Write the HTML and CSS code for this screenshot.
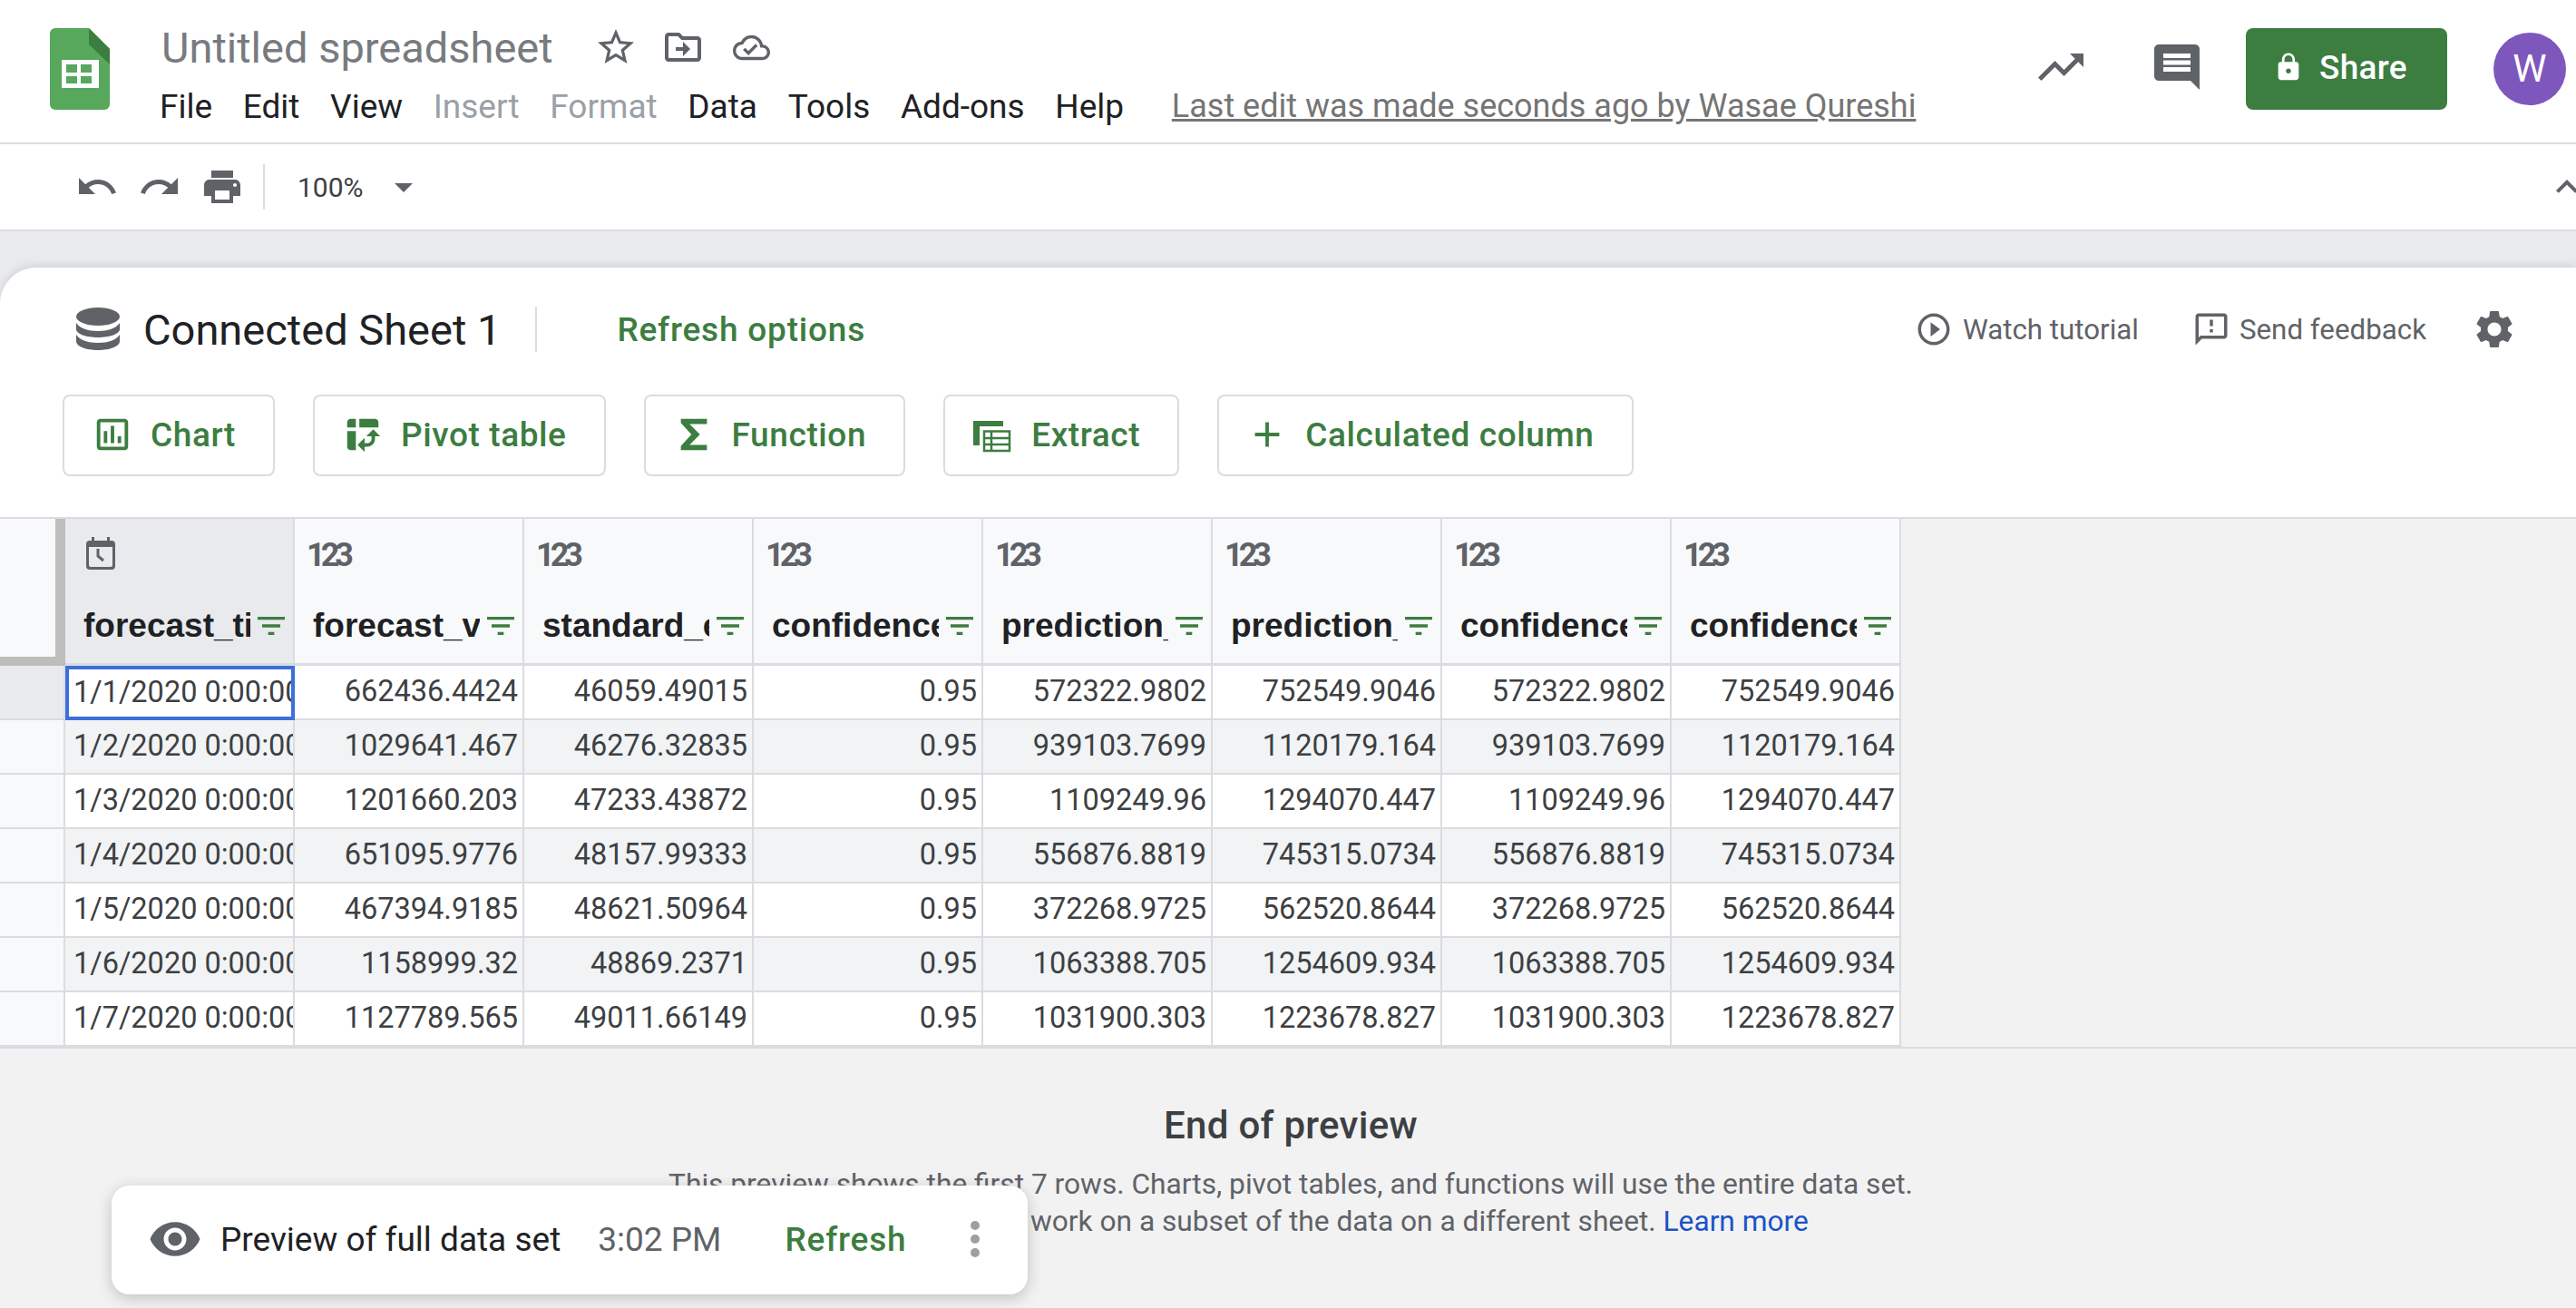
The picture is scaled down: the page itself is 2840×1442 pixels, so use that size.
FILE: index.html
```html
<!DOCTYPE html>
<html>
<head>
    <title>Untitled spreadsheet</title>
    <link rel="stylesheet" href="styles.css">
</head>
<body>
    <header class="topbar">
        <svg class="logo" viewBox="0 0 66 90">
            <path fill="#57a75c" d="M6 0H43L66 23V84a6 6 0 0 1-6 6H6a6 6 0 0 1-6-6V6a6 6 0 0 1 6-6z"/>
            <path fill="#3c7d40" d="M43 0L66 23V40L43 18z"/>
            <rect fill="#fff" x="13" y="35" width="41" height="31"/>
            <path fill="#57a75c" d="M18 40h12v9H18zM34 40h12v9H34zM18 53h12v8H18zM34 53h12v8H34z"/>
        </svg>
        <div class="doc">
            <div class="doc-title">
                <span class="doc-name">Untitled spreadsheet</span>
                <svg class="icon-star" viewBox="0 0 24 24"><path d="M22 9.24l-7.19-.62L12 2 9.19 8.63 2 9.24l5.46 4.73L5.82 21 12 17.27 18.18 21l-1.63-7.03L22 9.24zM12 15.4l-3.76 2.27 1-4.28-3.32-2.88 4.38-.38L12 6.1l1.71 4.04 4.38.38-3.32 2.88 1 4.28L12 15.4z"/></svg>
                <svg class="icon-folder" viewBox="0 0 24 24"><path d="M20 6h-8l-2-2H4c-1.1 0-2 .9-2 2v12c0 1.1.9 2 2 2h16c1.1 0 2-.9 2-2V8c0-1.1-.9-2-2-2zm0 12H4V6h5.17l2 2H20v10zm-8-4H8v-2h4V9l4 4-4 4v-3z"/></svg>
                <svg class="icon-cloud" viewBox="0 0 24 24"><path d="M19.35 10.04C18.67 6.59 15.64 4 12 4 9.11 4 6.6 5.64 5.35 8.04 2.34 8.36 0 10.91 0 14c0 3.31 2.69 6 6 6h13c2.76 0 5-2.24 5-5 0-2.64-2.05-4.78-4.65-4.96zM19 18H6c-2.21 0-4-1.79-4-4 0-2.05 1.53-3.76 3.56-3.97l1.07-.11.5-.95C8.08 7.14 9.94 6 12 6c2.62 0 4.88 1.86 5.39 4.43l.3 1.5 1.53.11c1.56.1 2.78 1.41 2.78 2.96 0 1.65-1.35 3-3 3zm-9-3.82l-2.09-2.09L6.5 13.5 10 17l6.01-6.01-1.41-1.41z"/></svg>
            </div>
            <nav class="menu">
                <span>File</span>
                <span>Edit</span>
                <span>View</span>
                <span class="off">Insert</span>
                <span class="off">Format</span>
                <span>Data</span>
                <span>Tools</span>
                <span>Add-ons</span>
                <span>Help</span>
                <a class="last-edit">Last edit was made seconds ago by Wasae Qureshi</a>
            </nav>
        </div>
        <div class="top-right">
            <svg class="icon-top" viewBox="0 0 24 24"><path d="M16 6l2.29 2.29-4.88 4.88-4-4L2 16.59 3.41 18l6-6 4 4 6.3-6.29L22 12V6z"/></svg>
            <svg class="icon-top icon-comment" viewBox="0 0 24 24"><path d="M21.99 4c0-1.1-.89-2-1.99-2H4c-1.1 0-2 .9-2 2v12c0 1.1.9 2 2 2h14l4 4-.01-18zM18 14H6v-2h12v2zm0-3H6V9h12v2zm0-3H6V6h12v2z"/></svg>
            <button class="share">
                <svg viewBox="0 0 24 24"><path d="M18 8h-1V6c0-2.76-2.24-5-5-5S7 3.24 7 6v2H6c-1.1 0-2 .9-2 2v10c0 1.1.9 2 2 2h12c1.1 0 2-.9 2-2V10c0-1.1-.9-2-2-2zm-6 9c-1.1 0-2-.9-2-2s.9-2 2-2 2 .9 2 2-.9 2-2 2zm3.1-9H8.9V6c0-1.71 1.39-3.1 3.1-3.1 1.71 0 3.1 1.39 3.1 3.1v2z"/></svg>
                Share
            </button>
            <div class="avatar">W</div>
        </div>
    </header>

    <div class="toolbar">
        <svg class="tool" viewBox="0 0 24 24"><path d="M12.5 8c-2.65 0-5.05.99-6.9 2.6L2 7v9h9l-3.62-3.62c1.39-1.16 3.16-1.88 5.12-1.88 3.54 0 6.55 2.31 7.6 5.5l2.37-.78C21.08 11.03 17.15 8 12.5 8z"/></svg>
        <svg class="tool" viewBox="0 0 24 24"><path d="M18.4 10.6C16.55 8.99 14.15 8 11.5 8c-4.65 0-8.58 3.03-9.96 7.22L3.9 16c1.05-3.19 4.05-5.5 7.6-5.5 1.95 0 3.73.72 5.12 1.88L13 16h9V7l-3.6 3.6z"/></svg>
        <svg class="tool" viewBox="0 0 24 24"><path d="M19 8H5c-1.66 0-3 1.34-3 3v6h4v4h12v-4h4v-6c0-1.66-1.34-3-3-3zm-3 11H8v-5h8v5zm3-7c-.55 0-1-.45-1-1s.45-1 1-1 1 .45 1 1-.45 1-1 1zm-1-9H6v4h12V3z"/></svg>
        <div class="tool-sep"></div>
        <span class="zoom-val">100%</span>
        <svg class="tool tool-drop" viewBox="0 0 24 24"><path d="M7 10l5 5 5-5z"/></svg>
        <svg class="tool tool-collapse" viewBox="0 0 24 24"><path d="M12 8l-6 6 1.41 1.41L12 10.83l4.59 4.58L18 14z"/></svg>
    </div>

    <main class="panel">
        <div class="panel-head">
            <svg class="icon-db" viewBox="0 0 48 48">
                <ellipse cx="24" cy="10" rx="24" ry="10"/>
                <path d="M0 17c4 6 13 9 24 9s20-3 24-9v7c0 5-11 9-24 9S0 29 0 24z"/>
                <path d="M0 30c4 6 13 9 24 9s20-3 24-9v7c0 6-11 10-24 10S0 43 0 37z"/>
            </svg>
            <h1>Connected Sheet 1</h1>
            <div class="head-sep"></div>
            <a class="refresh-options">Refresh options</a>
            <div class="head-links">
                <svg viewBox="0 0 24 24"><path d="M10 16.5l6-4.5-6-4.5v9zM12 2C6.48 2 2 6.48 2 12s4.48 10 10 10 10-4.48 10-10S17.52 2 12 2zm0 18c-4.41 0-8-3.59-8-8s3.59-8 8-8 8 3.59 8 8-3.59 8-8 8z"/></svg>
                <span class="watch">Watch tutorial</span>
                <svg class="icon-feedback" viewBox="0 0 24 24"><path d="M20 2H4c-1.1 0-1.99.9-1.99 2L2 22l4-4h14c1.1 0 2-.9 2-2V4c0-1.1-.9-2-2-2zm0 14H5.17L4 17.17V4h16v12zm-9-4h2v2h-2zm0-6h2v4h-2z"/></svg>
                <span class="feedback">Send feedback</span>
                <svg class="icon-gear" viewBox="0 0 24 24"><path d="M19.14 12.94c.04-.3.06-.61.06-.94 0-.32-.02-.64-.07-.94l2.03-1.58c.18-.14.23-.41.12-.61l-1.92-3.32c-.12-.22-.37-.29-.59-.22l-2.39.96c-.5-.38-1.03-.7-1.62-.94l-.36-2.54c-.04-.24-.24-.41-.48-.41h-3.84c-.24 0-.43.17-.47.41l-.36 2.54c-.59.24-1.13.57-1.62.94l-2.39-.96c-.22-.08-.47 0-.59.22L2.74 8.87c-.12.21-.08.47.12.61l2.03 1.58c-.05.3-.09.63-.09.94s.02.64.07.94l-2.03 1.58c-.18.14-.23.41-.12.61l1.92 3.32c.12.22.37.29.59.22l2.39-.96c.5.38 1.03.7 1.62.94l.36 2.54c.05.24.24.41.48.41h3.84c.24 0 .44-.17.47-.41l.36-2.54c.59-.24 1.13-.56 1.62-.94l2.39.96c.22.08.47 0 .59-.22l1.92-3.32c.12-.22.07-.47-.12-.61l-2.01-1.58zM12 15.6c-1.98 0-3.6-1.62-3.6-3.6s1.62-3.6 3.6-3.6 3.6 1.62 3.6 3.6-1.62 3.6-3.6 3.6z"/></svg>
            </div>
        </div>

        <div class="actions">
            <button class="action">
                <svg viewBox="0 0 24 24"><path d="M19 3H5c-1.1 0-2 .9-2 2v14c0 1.1.9 2 2 2h14c1.1 0 2-.9 2-2V5c0-1.1-.9-2-2-2zm0 16H5V5h14v14zM7 10h2v7H7zm4-3h2v10h-2zm4 6h2v4h-2z"/></svg>
                Chart
            </button>
            <button class="action">
                <svg viewBox="0 0 24 24"><path d="M10 8h11V5c0-1.1-.9-2-2-2h-9v5zM3 8h5V3H5c-1.1 0-2 .9-2 2v3zm2 13h3V10H3v9c0 1.1.9 2 2 2zm8 1l-4-4 4-4zm1-9l4-4 4 4zm.58 6H13v-2h1.58c1.33 0 2.42-1.08 2.42-2.42V13h2v1.58c0 2.44-1.98 4.42-4.42 4.42z"/></svg>
                Pivot table
            </button>
            <button class="action">
                <svg viewBox="0 0 24 24"><path d="M4.5 3h15v3h-10l6 6-6 6h10v3h-15v-2.4L10.6 12 4.5 5.4z"/></svg>
                Function
            </button>
            <button class="action">
                <svg viewBox="0 0 46 46">
                    <path d="M1 8h33v6H8v21H1z"/>
                    <path class="extract-lines" d="M13 19.5h28v21.5H13zM13 27h28M13 34h28M21 19.5v21.5"/>
                </svg>
                Extract
            </button>
            <button class="action">
                <svg viewBox="0 0 24 24"><path d="M19 13h-6v6h-2v-6H5v-2h6V5h2v6h6v2z"/></svg>
                Calculated column
            </button>
        </div>

        <div class="grid">
            <div class="corner"></div>
            <div class="col-head picked">
                <svg class="icon-cal" viewBox="0 0 32 36">
                    <path d="M6 0h3v4h14V0h3v4h2a4 4 0 0 1 4 4v24a4 4 0 0 1-4 4H4a4 4 0 0 1-4-4V8a4 4 0 0 1 4-4h2zM3 11v20a2 2 0 0 0 2 2h22a2 2 0 0 0 2-2V11z"/>
                    <path class="cal-hands" d="M13 13v8l6 5"/>
                </svg>
                <div class="col-name"><span>forecast_timestamp</span><svg viewBox="0 0 24 24"><path d="M10 18h4v-2h-4v2zM3 6v2h18V6H3zm3 7h12v-2H6v2z"/></svg></div>
            </div>
            <div class="col-head"><div class="type">123</div><div class="col-name"><span>forecast_value</span><svg viewBox="0 0 24 24"><path d="M10 18h4v-2h-4v2zM3 6v2h18V6H3zm3 7h12v-2H6v2z"/></svg></div></div>
            <div class="col-head"><div class="type">123</div><div class="col-name"><span>standard_error</span><svg viewBox="0 0 24 24"><path d="M10 18h4v-2h-4v2zM3 6v2h18V6H3zm3 7h12v-2H6v2z"/></svg></div></div>
            <div class="col-head"><div class="type">123</div><div class="col-name"><span>confidence_level</span><svg viewBox="0 0 24 24"><path d="M10 18h4v-2h-4v2zM3 6v2h18V6H3zm3 7h12v-2H6v2z"/></svg></div></div>
            <div class="col-head"><div class="type">123</div><div class="col-name"><span>prediction_interval</span><svg viewBox="0 0 24 24"><path d="M10 18h4v-2h-4v2zM3 6v2h18V6H3zm3 7h12v-2H6v2z"/></svg></div></div>
            <div class="col-head"><div class="type">123</div><div class="col-name"><span>prediction_interval</span><svg viewBox="0 0 24 24"><path d="M10 18h4v-2h-4v2zM3 6v2h18V6H3zm3 7h12v-2H6v2z"/></svg></div></div>
            <div class="col-head"><div class="type">123</div><div class="col-name"><span>confidence_interval</span><svg viewBox="0 0 24 24"><path d="M10 18h4v-2h-4v2zM3 6v2h18V6H3zm3 7h12v-2H6v2z"/></svg></div></div>
            <div class="col-head"><div class="type">123</div><div class="col-name"><span>confidence_interval</span><svg viewBox="0 0 24 24"><path d="M10 18h4v-2h-4v2zM3 6v2h18V6H3zm3 7h12v-2H6v2z"/></svg></div></div>

            <div class="row-head picked"></div>
            <div class="cell date selected">1/1/2020 0:00:00</div>
            <div class="cell">662436.4424</div><div class="cell">46059.49015</div><div class="cell">0.95</div><div class="cell">572322.9802</div><div class="cell">752549.9046</div><div class="cell">572322.9802</div><div class="cell">752549.9046</div>

            <div class="row-head"></div>
            <div class="cell date band">1/2/2020 0:00:00</div>
            <div class="cell band">1029641.467</div><div class="cell band">46276.32835</div><div class="cell band">0.95</div><div class="cell band">939103.7699</div><div class="cell band">1120179.164</div><div class="cell band">939103.7699</div><div class="cell band">1120179.164</div>

            <div class="row-head"></div>
            <div class="cell date">1/3/2020 0:00:00</div>
            <div class="cell">1201660.203</div><div class="cell">47233.43872</div><div class="cell">0.95</div><div class="cell">1109249.96</div><div class="cell">1294070.447</div><div class="cell">1109249.96</div><div class="cell">1294070.447</div>

            <div class="row-head"></div>
            <div class="cell date band">1/4/2020 0:00:00</div>
            <div class="cell band">651095.9776</div><div class="cell band">48157.99333</div><div class="cell band">0.95</div><div class="cell band">556876.8819</div><div class="cell band">745315.0734</div><div class="cell band">556876.8819</div><div class="cell band">745315.0734</div>

            <div class="row-head"></div>
            <div class="cell date">1/5/2020 0:00:00</div>
            <div class="cell">467394.9185</div><div class="cell">48621.50964</div><div class="cell">0.95</div><div class="cell">372268.9725</div><div class="cell">562520.8644</div><div class="cell">372268.9725</div><div class="cell">562520.8644</div>

            <div class="row-head"></div>
            <div class="cell date band">1/6/2020 0:00:00</div>
            <div class="cell band">1158999.32</div><div class="cell band">48869.2371</div><div class="cell band">0.95</div><div class="cell band">1063388.705</div><div class="cell band">1254609.934</div><div class="cell band">1063388.705</div><div class="cell band">1254609.934</div>

            <div class="row-head"></div>
            <div class="cell date">1/7/2020 0:00:00</div>
            <div class="cell">1127789.565</div><div class="cell">49011.66149</div><div class="cell">0.95</div><div class="cell">1031900.303</div><div class="cell">1223678.827</div><div class="cell">1031900.303</div><div class="cell">1223678.827</div>
        </div>

        <section class="preview-end">
            <h2>End of preview</h2>
            <p>This preview shows the first 7 rows. Charts, pivot tables, and functions will use the entire data set.</p>
            <p>Create an extract to work on a subset of the data on a different sheet. <a>Learn more</a></p>
        </section>
    </main>

    <div class="toast">
        <svg class="icon-eye" viewBox="0 0 24 24"><path d="M12 4.5C7 4.5 2.73 7.61 1 12c1.73 4.39 6 7.5 11 7.5s9.27-3.11 11-7.5c-1.73-4.39-6-7.5-11-7.5zM12 17c-2.76 0-5-2.24-5-5s2.24-5 5-5 5 2.24 5 5-2.24 5-5 5zm0-8c-1.66 0-3 1.34-3 3s1.34 3 3 3 3-1.34 3-3-1.34-3-3-3z"/></svg>
        <span class="toast-label">Preview of full data set</span>
        <span class="toast-time">3:02 PM</span>
        <a class="toast-refresh">Refresh</a>
        <div class="dots"><i></i><i></i><i></i></div>
    </div>
</body>
</html>
```

FILE: styles.css
```css
* {
    box-sizing: border-box;
}

body {
    margin: 0;
    width: 2840px;
    height: 1442px;
    overflow: hidden;
    position: relative;
    background-color: #e8eaed;
    font-family: Roboto, Arial, sans-serif;
    color: #202124;
}

svg {
    fill: #5f6368;
    flex: none;
}

/* top bar */
.topbar {
    display: flex;
    height: 159px;
    background-color: #fff;
    border-bottom: 2px solid #dadce0;
}

.logo {
    width: 66px;
    height: 90px;
    margin: 31px 0 0 55px;
}

.doc {
    margin-left: 55px;
    padding-top: 22px;
}

.doc-title {
    display: flex;
    align-items: center;
    height: 60px;
}

.doc-name {
    font-size: 47px;
    color: #777b80;
    margin-left: 2px;
    margin-right: 45px;
}

.icon-star, .icon-folder {
    width: 48px;
    height: 48px;
    margin-right: 26px;
}

.icon-cloud {
    width: 41px;
    height: 41px;
    margin-left: 5px;
}

.menu {
    display: flex;
    align-items: center;
    margin-top: 13px;
    height: 44px;
    font-size: 37px;
}

.menu span {
    margin-right: 33.7px;
}

.menu .off {
    color: #9aa0a6;
}

.last-edit {
    margin-left: 19px;
    font-size: 36px;
    color: #757575;
    text-decoration: underline;
}

.top-right {
    display: flex;
    align-items: center;
    margin-left: auto;
    height: 90px;
    margin-top: 31px;
    padding-right: 11px;
}

.icon-top {
    width: 60px;
    height: 60px;
    margin-top: -4px;
}

.icon-comment {
    margin-left: 68px;
    margin-right: 46px;
}

.share {
    display: flex;
    align-items: center;
    width: 222px;
    height: 90px;
    padding: 0 0 4px 30px;
    border: none;
    border-radius: 8px;
    background-color: #3c7d40;
    color: #fff;
    font-family: Roboto, Arial, sans-serif;
    font-size: 37px;
    font-weight: 500;
    letter-spacing: 0.3px;
}

.share svg {
    width: 34px;
    height: 34px;
    fill: #fff;
    margin-right: 17px;
}

.avatar {
    width: 80px;
    height: 80px;
    margin-left: 51px;
    border-radius: 50%;
    background-color: #7e57bc;
    color: #fff;
    font-size: 42px;
    line-height: 80px;
    text-align: center;
}

/* toolbar */
.toolbar {
    display: flex;
    align-items: center;
    height: 96px;
    padding-left: 83px;
    background-color: #fff;
    border-bottom: 2px solid #dadce0;
}

.tool {
    width: 48px;
    height: 48px;
    margin-right: 21px;
}

.tool-sep {
    width: 2px;
    height: 50px;
    background-color: #dadce0;
}

.zoom-val {
    margin-left: 36px;
    font-size: 30px;
    color: #3c4043;
}

.tool-drop {
    margin-left: 20px;
}

.tool-collapse {
    margin-left: auto;
    margin-right: -14px;
}

/* connected sheet panel */
.panel {
    margin-top: 40px;
    height: 1147px;
    background-color: #f2f2f2;
    border-top-left-radius: 40px;
    box-shadow: 0 -2px 8px rgba(60, 64, 67, 0.15);
    overflow: hidden;
}

.panel-head {
    display: flex;
    align-items: center;
    height: 93px;
    padding: 43px 65px 0 84px;
    background-color: #fff;
}

.icon-db {
    width: 48px;
    height: 48px;
}

.panel-head h1 {
    margin: 0 0 0 26px;
    font-size: 47px;
    font-weight: 400;
}

.head-sep {
    width: 2px;
    height: 50px;
    margin: 0 88px 0 38px;
    background-color: #dadce0;
}

.refresh-options {
    font-size: 37px;
    font-weight: 500;
    letter-spacing: 0.8px;
    color: #3c7d40;
}

.head-links {
    display: flex;
    align-items: center;
    margin-left: auto;
    font-size: 31.3px;
    color: #5f6368;
}

.head-links svg {
    width: 42px;
    height: 42px;
}

.watch {
    margin-left: 11px;
}

.head-links .icon-feedback {
    margin-left: 59px;
}

.feedback {
    margin-left: 10px;
}

.head-links .icon-gear {
    width: 50px;
    height: 50px;
    margin-left: 50px;
}

.actions {
    display: flex;
    gap: 42px;
    padding: 47px 0 45px 69px;
    background-color: #fff;
}

.action {
    display: flex;
    align-items: center;
    height: 90px;
    padding: 0 41px 2px 30px;
    border: 2px solid #dadce0;
    border-radius: 8px;
    background-color: #fff;
    color: #3c7d40;
    font-family: Roboto, Arial, sans-serif;
    font-size: 37px;
    font-weight: 500;
    letter-spacing: 0.6px;
}

.action svg {
    width: 46px;
    height: 46px;
    margin-right: 19px;
    fill: #3c7d40;
}

.extract-lines {
    fill: none;
    stroke: #3c7d40;
    stroke-width: 2.5;
}

/* data grid */
.grid {
    display: grid;
    grid-template-columns: 72px repeat(8, 253px);
    grid-auto-rows: 60px;
    grid-template-rows: 162px;
    border-top: 2px solid #dadce0;
    border-bottom: 2px solid #dadce0;
}

.corner {
    background-color: #f8f9fa;
    border-right: 11px solid #bdbdbd;
    border-bottom: 10px solid #bdbdbd;
}

.col-head {
    position: relative;
    background-color: #f8f9fa;
    border-right: 2px solid #dadce0;
    border-bottom: 3px solid #dadce0;
    padding-top: 20px;
}

.col-head.picked {
    background-color: #e8eaed;
}

.type {
    height: 40px;
    padding-left: 13px;
    font-size: 36px;
    font-weight: 700;
    line-height: 40px;
    letter-spacing: -5px;
    color: #5f6368;
}

.icon-cal {
    display: block;
    width: 32px;
    height: 36px;
    margin-left: 23px;
}

.cal-hands {
    fill: none;
    stroke: #5f6368;
    stroke-width: 3;
}

.col-name {
    display: flex;
    align-items: center;
    height: 44px;
    margin-top: 36px;
    padding-left: 20px;
    font-family: "Liberation Sans", Arial, sans-serif;
    font-size: 37px;
    font-weight: 700;
}

.picked .col-name {
    margin-top: 40px;
}

.col-name span {
    width: 184px;
    overflow: hidden;
    white-space: nowrap;
}

.col-name svg {
    width: 40px;
    height: 40px;
    margin-left: 3px;
    fill: #3c7d40;
}

.row-head {
    background-color: #f8f9fa;
    border-right: 2px solid #dadce0;
    border-bottom: 2px solid #dadce0;
}

.row-head.picked {
    background-color: #e8eaed;
}

.cell {
    padding: 0 5px 0 0;
    background-color: #fff;
    border-right: 2px solid #dadce0;
    border-bottom: 2px solid #dadce0;
    font-size: 32.5px;
    line-height: 56px;
    text-align: right;
    white-space: nowrap;
    overflow: hidden;
    color: #3c4043;
}

.cell.band {
    background-color: #f1f3f4;
}

.cell.date {
    padding-left: 9px;
    padding-right: 0;
    text-align: left;
}

.cell.selected {
    padding-left: 5px;
    line-height: 50px;
    border: 4px solid #3c6fdc;
}

/* end of preview note */
.preview-end {
    padding: 60px 0 0 6px;
    text-align: center;
}

.preview-end h2 {
    margin: 0 0 19px;
    font-size: 42px;
    font-weight: 500;
    line-height: 50px;
    letter-spacing: 0.3px;
    color: #3c4043;
}

.preview-end p {
    margin: 0;
    font-size: 31.7px;
    line-height: 41px;
    color: #5f6368;
}

.preview-end a {
    color: #1a53c8;
}

/* floating toast */
.toast {
    position: absolute;
    left: 123px;
    top: 1307px;
    display: flex;
    align-items: center;
    width: 1010px;
    height: 120px;
    padding: 0 0 2px 40px;
    background-color: #fff;
    border-radius: 20px;
    box-shadow: 0 4px 16px rgba(60, 64, 67, 0.28);
    font-size: 37px;
}

.icon-eye {
    width: 60px;
    height: 60px;
}

.toast-label {
    margin-left: 20px;
}

.toast-time {
    margin-left: 41px;
    color: #5f6368;
}

.toast-refresh {
    margin-left: 70px;
    font-weight: 500;
    letter-spacing: 0.8px;
    color: #3c7d40;
}

.dots {
    display: flex;
    flex-direction: column;
    gap: 5px;
    margin-left: 71px;
}

.dots i {
    width: 10px;
    height: 10px;
    border-radius: 50%;
    background-color: #9aa0a6;
}
```
